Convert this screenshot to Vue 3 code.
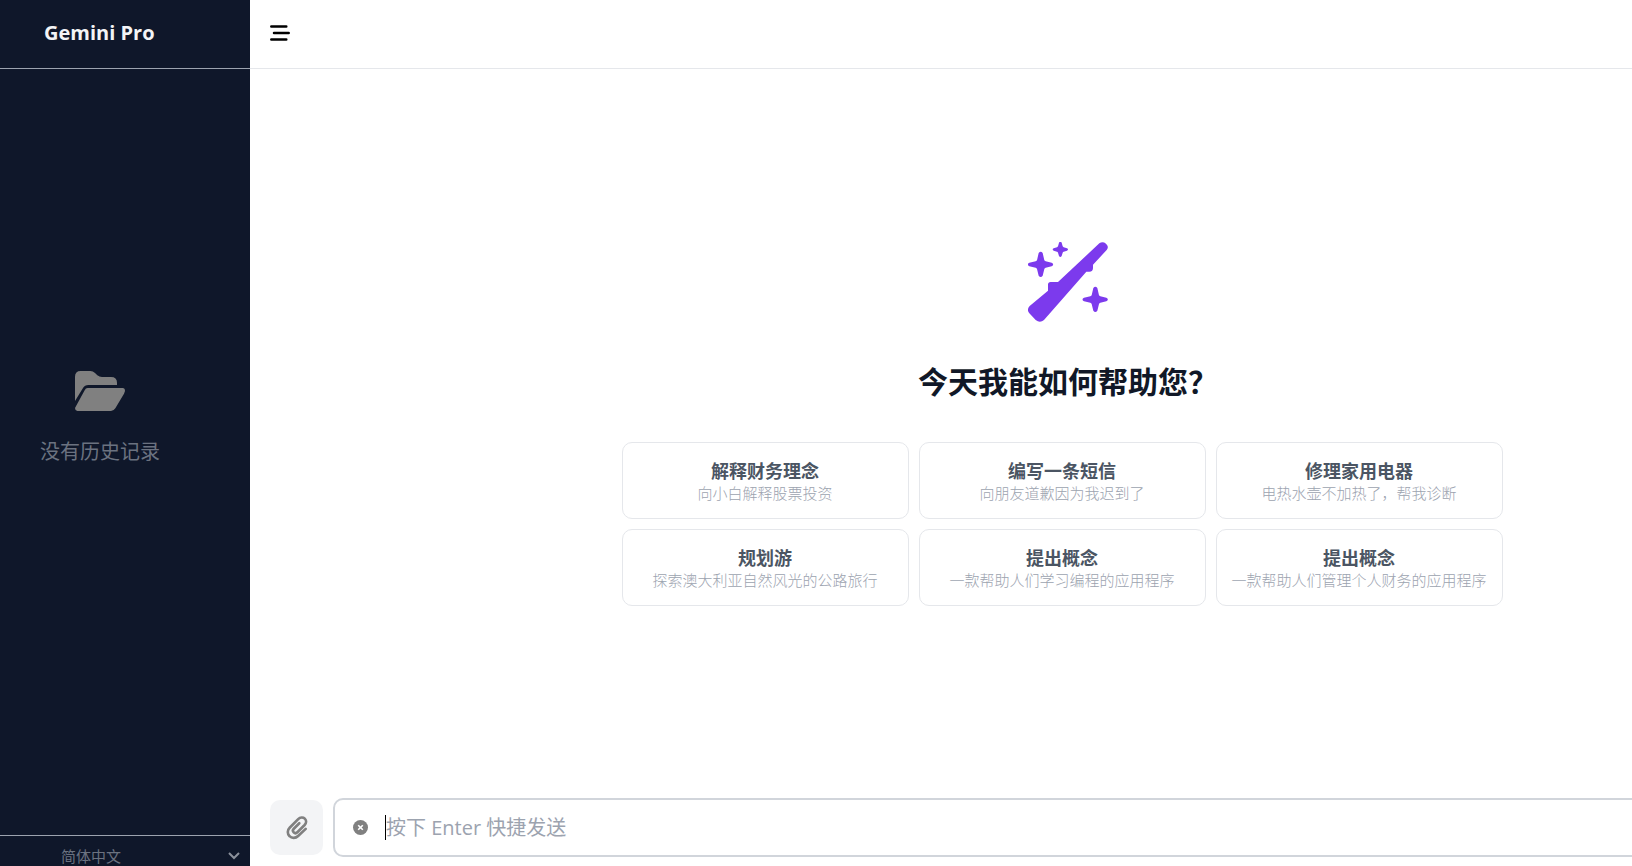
<script setup>
import { ref } from 'vue'

const message = ref('')
const language = ref('zh-CN')

const suggestions = [
  { title: '解释财务理念', text: '向小白解释股票投资' },
  { title: '编写一条短信', text: '向朋友道歉因为我迟到了' },
  { title: '修理家用电器', text: '电热水壶不加热了，帮我诊断' },
  { title: '规划游', text: '探索澳大利亚自然风光的公路旅行' },
  { title: '提出概念', text: '一款帮助人们学习编程的应用程序' },
  { title: '提出概念', text: '一款帮助人们管理个人财务的应用程序' },
]
</script>

<template>
  <div class="app">
    <aside class="sidebar">
      <header class="brand"><h1>Gemini Pro</h1></header>
      <div class="history">
        <svg width="50" height="40" viewBox="0 0 150 120" fill="#808080" aria-hidden="true">
          <path d="M0 90V17Q0 0 17 0H46Q54 0 60 6L67 13Q73 18 81 18H108Q126 18 126 35V42H40Q29 42 24 51Z" />
          <path d="M38 51H143Q150 51 150 60L147 68L121 112Q116 120 108 120H7Q0 119 0 111L29 58Q32 51 38 51Z" />
        </svg>
        <p>没有历史记录</p>
      </div>
      <footer class="locale">
        <select v-model="language" aria-label="语言">
          <option value="zh-CN">简体中文</option>
        </select>
        <svg class="chevron" width="12" height="8" viewBox="0 0 12 8" fill="none" stroke="#8b909b" stroke-width="2" aria-hidden="true">
          <path d="M1 1l5 5 5-5" />
        </svg>
      </footer>
    </aside>

    <main class="main">
      <header class="topbar">
        <button class="menu" type="button" aria-label="菜单">
          <svg width="20" height="16" viewBox="0 0 20 16" fill="none" stroke="#000" stroke-width="2.500" stroke-linecap="round" aria-hidden="true">
            <path d="M1.300 1.500h15M4 8h14.700M1.300 14.500h15" />
          </svg>
        </button>
      </header>

      <div class="workspace">
        <section class="welcome">
          <svg width="80" height="80" viewBox="0 0 240 240" fill="#7c3aed" aria-hidden="true">
            <path d="M214 4Q224 -3 234 5Q244 14 236 24L195 68V78Q195 89 184 89H175L48 234Q36 245 23 234L4 214Q-5 203 5 192L60 146V128Q60 120 68 120H90Z" />
            <path d="M32 33Q38 25 44 33L49 55Q50 57 53 58L71 62Q80 67 71 73L53 77Q50 78 49 81L44 101Q38 109 32 101L27 81Q26 78 23 77L4 73Q-5 67 4 62L23 58Q26 57 27 55Z" />
            <path d="M93 2Q97 -4 101 2L104 13Q105 15 107 16L117 19Q123 22 117 26L107 29Q105 29 104 32L101 42Q97 48 93 42L90 32Q89 29 87 29L77 26Q71 22 77 19L87 16Q89 15 90 13Z" />
            <path d="M196 138Q202 130 208 138L213 160Q214 162 217 163L235 167Q244 172 235 178L217 182Q214 183 213 186L208 206Q202 214 196 206L191 186Q190 183 187 182L168 178Q159 172 168 167L187 163Q190 162 191 160Z" />
          </svg>
          <h2>今天我能如何帮助您？</h2>
          <div class="cards">
            <button v-for="(item, i) in suggestions" :key="i" class="card" type="button">
              <strong>{{ item.title }}</strong>
              <span>{{ item.text }}</span>
            </button>
          </div>
        </section>

        <form class="composer" @submit.prevent>
          <button class="attach" type="button" aria-label="附件">
            <svg width="22" height="25" viewBox="0 0 24 26" fill="none" stroke="#808080" stroke-width="2.900" stroke-linecap="round" stroke-linejoin="round" aria-hidden="true">
              <path d="M21.500 14.500L13.200 22.300C10.500 25 6.200 25 3.900 22.500C1.300 20 1.300 16 4 13.300L13.300 3.900C15.500 1.700 18.600 1.500 20.500 3.300C22.500 5.300 22.300 8.200 20.300 10.300L12.400 18.200C11.200 19.400 9.500 19.400 8.400 18.300C7.300 17.200 7.300 15.600 8.500 14.400L14.500 8.400" />
            </svg>
          </button>
          <div class="field">
            <button class="clear" type="button" aria-label="清除">
              <svg width="15" height="15" viewBox="0 0 15 15" aria-hidden="true">
                <circle cx="7.500" cy="7.500" r="7.500" fill="#808080" />
                <path d="M5.200 5.200l4.600 4.600M9.800 5.200l-4.600 4.600" stroke="#fff" stroke-width="1.600" />
              </svg>
            </button>
            <span class="caret"></span>
            <input v-model="message" type="text" aria-label="消息" placeholder="按下 Enter 快捷发送" />
          </div>
        </form>
      </div>
    </main>
  </div>
</template>

<style>
body {
  background: #fff;
}
</style>

<style scoped>
.app,
.app * {
  box-sizing: border-box;
}

.app {
  display: flex;
  height: 100vh;
  overflow: hidden;
  font-family: "Open Sans", "Noto Sans CJK SC", sans-serif;
  color: #111827;
}

h1,
h2,
p {
  margin: 0;
}

button,
input,
select {
  margin: 0;
  padding: 0;
  border: 0;
  background: none;
  font: inherit;
  color: inherit;
}

svg {
  display: block;
}

.sidebar {
  display: flex;
  flex: none;
  flex-direction: column;
  width: 250px;
  background: #0f172a;
}

.brand {
  display: flex;
  align-items: center;
  height: 69px;
  padding: 0 44px 2px;
  border-bottom: 1px solid #9ca3af;
}

.brand h1 {
  font-size: 20px;
  font-weight: 700;
  line-height: 28px;
  color: #f3f4f6;
}

.history {
  display: flex;
  flex: 1;
  flex-direction: column;
  align-items: center;
  justify-content: center;
  gap: 26px;
  width: 200px;
  padding-bottom: 66px;
}

.history p {
  font-size: 20px;
  line-height: 30px;
  color: #6b7280;
}

.locale {
  display: flex;
  align-items: center;
  justify-content: space-between;
  height: 31px;
  padding: 10px 10px 0 61px;
  border-top: 1px solid #9ca3af;
  color: #6b7280;
}

.locale select {
  flex: 1;
  appearance: none;
  outline: none;
  font-size: 15px;
  line-height: 20px;
}

.main {
  display: flex;
  flex: 1;
  flex-direction: column;
  min-width: 0;
  overflow: hidden;
}

.topbar {
  display: flex;
  flex: none;
  align-items: center;
  height: 69px;
  padding: 0 20px 2px;
  border-bottom: 1px solid #e5e7eb;
}

.workspace {
  display: flex;
  flex: 1;
  flex-direction: column;
  min-width: 1636px;
}

.welcome {
  display: flex;
  flex: 1;
  flex-direction: column;
  align-items: center;
  justify-content: center;
  padding-bottom: 19px;
}

.welcome h2 {
  margin: 40px 0;
  font-size: 30px;
  font-weight: 700;
  line-height: 40px;
}

.cards {
  display: grid;
  grid-template-columns: repeat(3, 287px);
  gap: 10px;
  margin-right: 12px;
}

.card {
  display: flex;
  flex-direction: column;
  align-items: center;
  padding: 16px 0 15px;
  border: 1px solid #e5e7eb;
  border-radius: 10px;
  white-space: nowrap;
}

.card strong {
  font-size: 18px;
  font-weight: 700;
  line-height: 24px;
  color: #4b5563;
}

.card span {
  font-size: 15px;
  font-weight: 300;
  line-height: 20px;
  color: #9ca3af;
}

.composer {
  display: flex;
  align-items: center;
  gap: 10px;
  padding: 0 20px 9px;
}

.attach {
  display: grid;
  place-items: center;
  width: 53px;
  height: 55px;
  border-radius: 10px;
  background: #f3f4f6;
}

.field {
  display: flex;
  flex: 1;
  align-items: center;
  height: 59px;
  padding-left: 18px;
  border: 2px solid #d1d5db;
  border-radius: 10px;
}

.caret {
  width: 1px;
  height: 25px;
  margin-left: 17px;
  background: #000;
}

.field input {
  flex: 1;
  outline: none;
  font-size: 20px;
  line-height: 30px;
}

.field input::placeholder {
  color: #9ca3af;
  opacity: 1;
}
</style>
